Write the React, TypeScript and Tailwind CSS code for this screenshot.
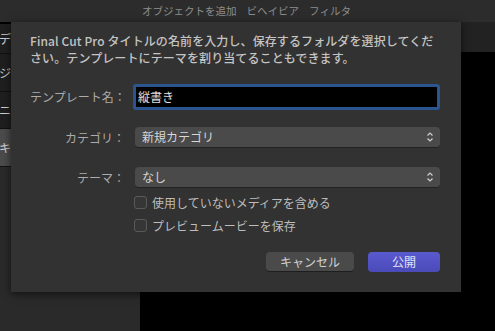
import React from 'react';

const font = { fontFamily: '"Noto Sans CJK JP", "Noto Sans", sans-serif' };

const Chevrons: React.FC = () => (
  <svg width="8" height="12" viewBox="0 0 8 12" className="shrink-0">
    <path d="M1.5 4.5 L4 2 L6.5 4.5" fill="none" stroke="#cfcfcf" strokeWidth="1.2" />
    <path d="M1.5 7.5 L4 10 L6.5 7.5" fill="none" stroke="#cfcfcf" strokeWidth="1.2" />
  </svg>
);

const Select: React.FC<{ value: string }> = ({ value }) => (
  <div className="flex items-center justify-between h-[21px] w-[305px] rounded-[4px] bg-[#4a4a4a] border-b border-[#222] pl-[7px] pr-[6px]">
    <span className="text-[12px] text-[#d6d6d6] leading-none">{value}</span>
    <Chevrons />
  </div>
);

const Checkbox: React.FC<{ label: string }> = ({ label }) => (
  <div className="flex items-center gap-[5px]">
    <div className="w-[13px] h-[13px] rounded-[3px] border border-[#5a5a5a] bg-[#363636]" />
    <span className="text-[12px] text-[#bdbdbd] leading-none">{label}</span>
  </div>
);

const Label: React.FC<{ text: string }> = ({ text }) => (
  <span className="w-[95px] shrink-0 whitespace-nowrap text-right text-[12px] text-[#ababab] leading-none">{text}</span>
);

const App: React.FC = () => {
  const sideRows = [
    { t: 'デ', h: 'h-[30px]' },
    { t: 'ジ', h: 'h-[38px]' },
    { t: 'ニ', h: 'h-[37px]' },
    { t: 'キ', h: 'h-[38px]' },
  ];

  return (
    <div className="relative w-[495px] h-[331px] overflow-hidden bg-black" style={font}>
      {/* top toolbar */}
      <div className="h-[22px] bg-[#2c2c2c] flex items-center justify-center gap-[10px] text-[10.5px] text-[#8c8c8c] pr-[2px]">
        <span>オブジェクトを追加</span>
        <span>ビヘイビア</span>
        <span>フィルタ</span>
      </div>

      {/* content behind the sheet */}
      <div className="flex h-[309px]">
        <div className="w-[140px] bg-[#2a2a2a] flex">
          <div className="w-[11px] flex flex-col border-t-2 border-black">
            {sideRows.map((r, i) => (
              <div
                key={r.t}
                className={`${r.h} flex items-center text-[12px] text-[#d0d0d0] border-b border-[#111] ${
                  i === 3 ? 'bg-[#4b4b4b]' : 'bg-[#1f1f1f]'
                }`}
              >
                <span className="-ml-[1px]">{r.t}</span>
              </div>
            ))}
          </div>
        </div>
        <div className="flex-1 flex flex-col">
          <div className="ml-auto w-[34px] h-[30px] bg-[#222]" />
        </div>
      </div>

      {/* sheet */}
      <div className="absolute left-[11px] top-[22px] w-[450px] h-[270px] bg-[#323232] shadow-[0_2px_8px_rgba(0,0,0,0.6)] pt-[10px] pl-[19px] pr-[21px]">
        <p className="text-[12px] leading-[17px] text-[#c4c4c4] font-medium tracking-[0.1px]">
          Final Cut Pro タイトルの名前を入力し、保存するフォルダを選択してください。テンプレートにテーマを割り当てることもできます。
        </p>

        <div className="mt-[18px] flex items-center">
          <Label text="テンプレート名：" />
          <div className="ml-[8px] w-[310px] h-[26px] rounded-[3px] border-[3px] border-[#2c558f] bg-black flex items-center pl-[2px]">
            <span className="text-[12px] text-[#e0e0e0] leading-none">縦書き</span>
          </div>
        </div>

        <div className="mt-[17px] flex items-center">
          <Label text="カテゴリ：" />
          <div className="ml-[10px]">
            <Select value="新規カテゴリ" />
          </div>
        </div>

        <div className="mt-[19px] flex items-center">
          <Label text="テーマ：" />
          <div className="ml-[10px]">
            <Select value="なし" />
          </div>
        </div>

        <div className="mt-[8px] ml-[104px] flex flex-col gap-[10px]">
          <Checkbox label="使用していないメディアを含める" />
          <Checkbox label="プレビュームービーを保存" />
        </div>

        <div className="mt-[20px] flex justify-end gap-[14px]">
          <div className="w-[88px] h-[20px] rounded-[4px] bg-[#4a4a4a] border-b border-[#1e1e1e] flex items-center justify-center text-[12px] text-[#d2d2d2] leading-none">
            キャンセル
          </div>
          <div className="w-[72px] h-[20px] rounded-[4px] bg-gradient-to-b from-[#5a5ad0] to-[#4a4ab8] flex items-center justify-center text-[12px] text-[#e4e4f4] leading-none">
            公開
          </div>
        </div>
      </div>
    </div>
  );
};

export default App;
